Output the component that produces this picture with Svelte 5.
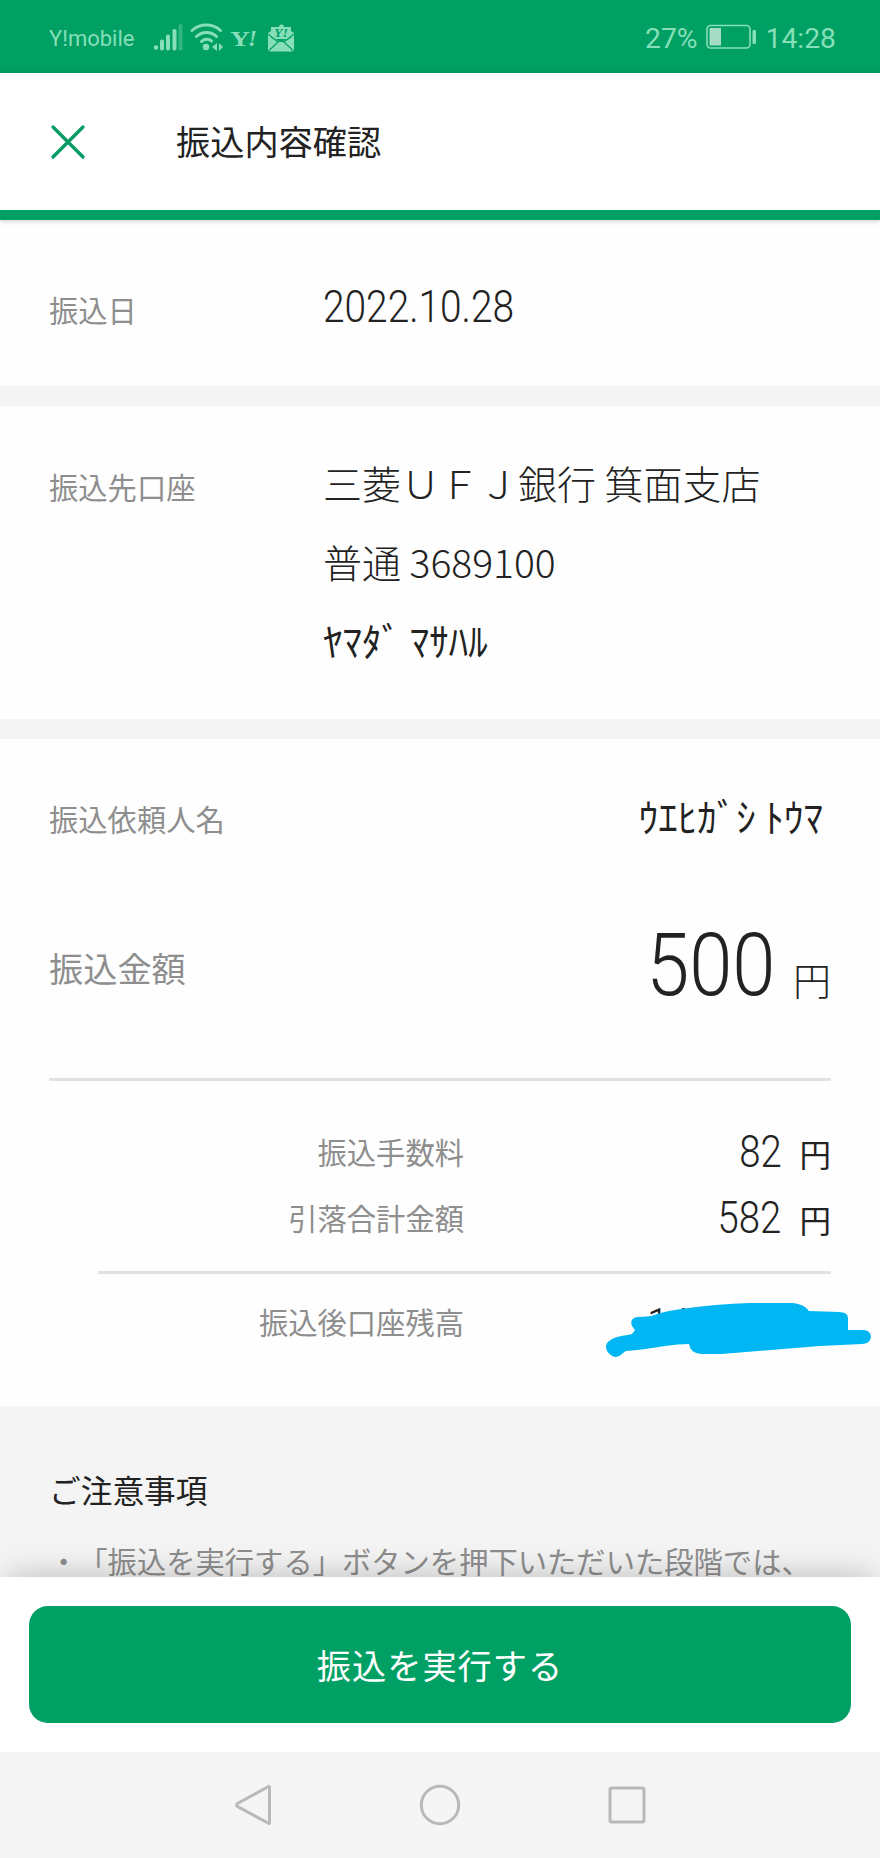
<script lang="ts">
	const account = {
		bank: '三菱ＵＦＪ銀行 箕面支店',
		number: '普通 3689100',
		holder: 'ﾔﾏﾀﾞ ﾏｻﾊﾙ'
	};

	const fees = [
		{ label: '振込手数料', value: 82 },
		{ label: '引落合計金額', value: 582 }
	];
</script>

<div class="screen">
	<div class="status-bar">
		<span class="carrier">Y!mobile</span>
		<svg class="status-icons" width="144" height="32" viewBox="0 0 144 32">
			<g fill="currentColor">
				<circle cx="3" cy="26.5" r="2.200" />
				<rect x="7" y="18.500" width="4" height="11" rx="1.800" />
				<rect x="13" y="13.500" width="4" height="16" rx="1.800" />
				<rect x="19.500" y="8" width="4" height="21.500" rx="1.800" />
				<rect x="25.500" y="3" width="4" height="26.500" rx="1.500" opacity="0.350" />
				<circle cx="53" cy="26" r="3.200" />
				<path d="M64 22v8l-5-4zM66 22v8l4-4z" />
			</g>
			<g fill="none" stroke="currentColor" stroke-width="3" stroke-linecap="round">
				<path d="M39 9.500a21.500 21.500 0 0 1 28.500 0" />
				<path d="M43.500 15.500a14.500 14.500 0 0 1 20 0" />
				<path d="M48.500 20.500a7.500 7.500 0 0 1 10-.500" />
			</g>
			<text class="yahoo" x="77" y="24.500" font-size="22" textLength="20" lengthAdjust="spacingAndGlyphs">Y</text>
			<text class="yahoo mark" x="95" y="24.500" font-size="23">!</text>
			<g fill="currentColor">
				<path d="M118 6h8a2.500 2.500 0 0 1 5 0h7v12h-20z" />
				<path d="M115 12l3-2v6l10 5 10-5v-6l3 2v16.500q0 2-2 2h-22q-2 0-2-2z" />
			</g>
			<path
				d="M115 13l10 8M141 13l-10 8M116 29.500l9-8.500q3-2 6 0l9 8.500M118 16l7.500 5M138 16l-7.500 5"
				fill="none"
				stroke="#00a064"
				stroke-width="1.200"
			/>
			<text class="yahoo small" x="121" y="16" font-size="12" textLength="14" lengthAdjust="spacingAndGlyphs">Y!</text>
		</svg>
		<div class="status-right">
			<span>27%</span>
			<svg width="52" height="26" viewBox="0 0 52 26">
				<rect x="1" y="1.500" width="43" height="22.500" rx="3.500" fill="none" stroke="currentColor" stroke-width="1.600" />
				<rect x="3.500" y="4" width="11.500" height="17.500" fill="#a4dcc5" />
				<rect x="46.500" y="6" width="3.500" height="14" rx="1" fill="currentColor" />
			</svg>
			<span class="clock">14:28</span>
		</div>
	</div>

	<header>
		<button class="close-button" aria-label="閉じる">
			<svg width="36" height="36" viewBox="0 0 36 36">
				<path d="M3 3l30 30M33 3L3 33" fill="none" stroke="#069b62" stroke-width="3.400" stroke-linecap="round" />
			</svg>
		</button>
		<h1>振込内容確認</h1>
	</header>

	<main>
		<section class="date">
			<span class="label">振込日</span>
			<span class="value"><span class="digits">2022.10.28</span></span>
		</section>

		<section class="account">
			<span class="label">振込先口座</span>
			<div class="lines">
				<div class="light">{account.bank}</div>
				<div class="light">{account.number}</div>
				<div>{account.holder}</div>
			</div>
		</section>

		<section class="payment">
			<div class="row sender">
				<span class="label">振込依頼人名</span>
				<span class="sender-name">ｳｴﾋｶﾞｼ ﾄｳﾏ</span>
			</div>
			<div class="row amount">
				<span class="label large">振込金額</span>
				<span class="money big"><span class="digits">500</span><span class="yen">円</span></span>
			</div>
			<hr />
			<div class="fees">
				{#each fees as fee}
					<div class="row fee">
						<span class="label">{fee.label}</span>
						<span class="money"><span class="digits">{fee.value}</span><span class="yen">円</span></span>
					</div>
				{/each}
			</div>
			<hr class="indent" />
			<div class="row fee balance">
				<span class="label">振込後口座残高</span>
				<span class="hidden-balance">
					<span class="digits">14</span>
					<svg width="272" height="60" viewBox="604 1300 272 60">
						<path
							d="M632 1326C630 1321 632 1318 637 1317Q644 1317 651 1316Q665 1311 681 1309Q716 1304 750 1303H793Q804 1304 809 1311L839 1312Q848 1312 848 1318V1330L864 1330Q871 1331 871 1337Q870 1344 862 1344L820 1346L783 1349L722 1354H701Q690 1353 689 1344Q678 1344 665 1346Q642 1350 626 1351C621 1354 620 1357 615 1357C608 1355 603 1347 608 1342C614 1336 624 1336 632 1334L635 1330Z"
							fill="#00b7f3"
						/>
					</svg>
				</span>
			</div>
		</section>

		<section class="notice">
			<h2>ご注意事項</h2>
			<p>・「振込を実行する」ボタンを押下いただいた段階では、</p>
		</section>
	</main>

	<footer>
		<button class="submit-button">振込を実行する</button>
	</footer>

	<nav>
		<svg width="44" height="44" viewBox="0 0 44 44">
			<path d="M37.500 4v36q0 1-1 .3L5.500 23.500q-2-1.500 0-3L36.500 3.500q1-.5 1 .5z" />
		</svg>
		<svg width="44" height="44" viewBox="0 0 44 44"><circle cx="22" cy="22" r="18.700" /></svg>
		<svg width="44" height="44" viewBox="0 0 44 44"><rect x="5" y="5" width="34" height="34" rx="1.500" /></svg>
	</nav>
</div>

<style>
	:global(body) {
		background: #fff;
	}

	.screen {
		width: 880px;
		height: 1858px;
		display: flex;
		flex-direction: column;
		overflow: hidden;
		background: #fefefe;
		color: #222;
		font-family: 'Noto Sans CJK JP', sans-serif;
		text-spacing-trim: space-all;
	}

	button {
		border: none;
		padding: 0;
		background: none;
		font-family: inherit;
	}

	/* --- STATUS BAR --- */
	.status-bar {
		flex: none;
		height: 73px;
		box-sizing: border-box;
		padding: 1px 44px 0 49px;
		display: flex;
		align-items: center;
		background: #00a064;
		color: #86dfb8;
		font-family: Roboto, sans-serif;
	}

	.carrier {
		width: 104px;
		padding-top: 2px;
		font-size: 22px;
	}

	.yahoo {
		fill: currentColor;
		font-family: 'Liberation Serif', serif;
		font-weight: bold;
	}

	.yahoo.mark {
		font-style: italic;
	}

	.yahoo.small {
		fill: #00a064;
		font-style: italic;
	}

	.status-right {
		margin-left: auto;
		display: flex;
		align-items: center;
		gap: 8px;
		padding-top: 2px;
		font-size: 28.300px;
	}

	.status-right svg {
		margin-bottom: 2px;
	}

	/* --- HEADER --- */
	header {
		flex: none;
		height: 147px;
		box-sizing: border-box;
		border-bottom: 10px solid #00a064;
		padding-left: 50px;
		display: flex;
		align-items: center;
		position: relative;
		z-index: 1;
		background: #fff;
		box-shadow: 0 1px 5px rgba(0, 0, 0, 0.2);
	}

	.close-button {
		width: 36px;
		height: 36px;
	}

	.close-button svg {
		display: block;
	}

	h1 {
		margin: 0 0 4px 90px;
		font-size: 34.200px;
		font-weight: 400;
		line-height: 44px;
	}

	/* --- CONTENT --- */
	main {
		flex: 1;
		min-height: 0;
		overflow: hidden;
	}

	.label {
		color: #8e8e8e;
		font-size: 29.300px;
		line-height: 44px;
		white-space: nowrap;
	}

	.digits {
		display: inline-block;
		font-family: Roboto, sans-serif;
		font-size: 44px;
		font-weight: 300;
		line-height: 44px;
		transform: scaleX(0.87);
		transform-origin: right;
	}

	.date,
	.account {
		display: flex;
		box-sizing: border-box;
		padding-left: 49px;
		border-bottom: 20px solid #f4f4f4;
	}

	.date {
		height: 186px;
		padding-top: 65px;
	}

	.date .label {
		width: 274px;
		margin-top: 2px;
	}

	.date .digits {
		transform: scaleX(0.883);
		transform-origin: left;
	}

	.account {
		height: 333px;
		padding-top: 37px;
	}

	.account .label {
		width: 274px;
		margin-top: 21px;
	}

	.lines,
	.sender-name {
		font-size: 39px;
		line-height: 78.500px;
	}

	.light {
		font-weight: 300;
	}

	.payment {
		height: 667px;
		box-sizing: border-box;
		padding: 36px 49px 0;
	}

	.row {
		display: flex;
		align-items: center;
		justify-content: space-between;
	}

	.sender {
		height: 78px;
	}

	.sender .label {
		padding-top: 8px;
	}

	.sender-name {
		margin-right: 8px;
		padding-top: 2px;
	}

	.amount {
		height: 88px;
		margin: 68px 0 69px;
	}

	.label.large {
		font-size: 34.200px;
		padding-top: 4px;
	}

	.money {
		display: flex;
		align-items: baseline;
	}

	.money .yen {
		margin-left: 18px;
		font-size: 31.500px;
		line-height: 44px;
	}

	.big .digits {
		font-size: 88px;
		line-height: 88px;
		transform: scaleX(0.883);
	}

	.big .yen {
		font-size: 38px;
		font-weight: 300;
	}

	hr {
		height: 3px;
		margin: 0;
		border: none;
		background: #e2e2e2;
	}

	hr.indent {
		margin-left: 49px;
	}

	.fees {
		padding: 38px 0 20px;
	}

	.fee {
		height: 66px;
	}

	.fee .label {
		width: 415px;
		padding-bottom: 2px;
		text-align: right;
	}

	.fee .money {
		padding-top: 1px;
	}

	.balance {
		margin-top: 15px;
	}

	.hidden-balance {
		position: relative;
		width: 190px;
		padding-top: 6px;
	}

	/* Marker stroke covering the balance */
	.hidden-balance svg {
		position: absolute;
		left: -37px;
		top: 3px;
	}

	.notice {
		padding: 61px 49px 0;
		height: 300px;
		background: #f4f4f4;
	}

	h2 {
		margin: 0 0 27px;
		font-size: 31.700px;
		font-weight: 400;
		line-height: 44px;
	}

	.notice p {
		margin: 0;
		color: #8e8e8e;
		font-size: 29.300px;
		line-height: 44px;
		white-space: nowrap;
	}

	/* --- BOTTOM --- */
	footer {
		flex: none;
		height: 175px;
		box-sizing: border-box;
		padding: 29px;
		position: relative;
		background: #fff;
		box-shadow: 0 -8px 30px -8px rgba(0, 0, 0, 0.25);
	}

	.submit-button {
		display: block;
		width: 822px;
		height: 117px;
		padding-bottom: 2px;
		border-radius: 19px;
		background: #00a064;
		color: #fff;
		font-size: 34.200px;
		letter-spacing: 1px;
	}

	nav {
		flex: none;
		height: 106px;
		display: flex;
		justify-content: center;
		align-items: center;
		gap: 142.500px;
		position: relative;
		background: #f5f5f5;
	}

	nav svg {
		fill: none;
		stroke: #b9b9b9;
		stroke-width: 3;
	}
</style>
